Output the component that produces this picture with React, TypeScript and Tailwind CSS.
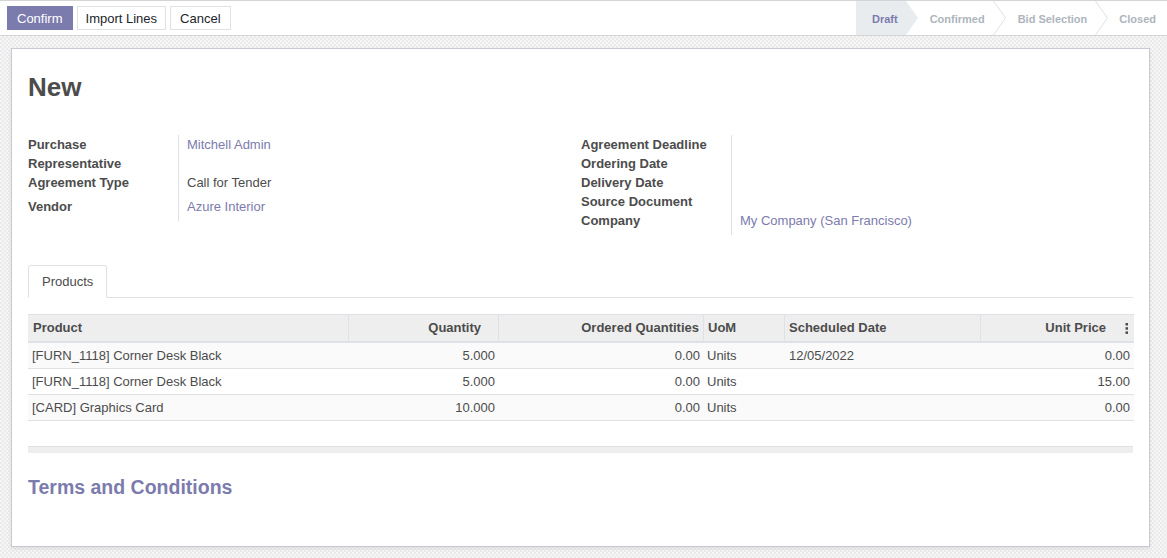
import React from "react";

const leftFields = [
  { label: "Purchase Representative", value: "Mitchell Admin", link: true, h: "h-[38px]", align: "items-start" },
  { label: "Agreement Type", value: "Call for Tender", link: false, h: "h-[19px]", align: "items-start" },
  { label: "Vendor", value: "Azure Interior", link: true, h: "h-[29px]", align: "items-center" },
];

const rightFields = [
  { label: "Agreement Deadline", value: "", h: "h-[19px]" },
  { label: "Ordering Date", value: "", h: "h-[19px]" },
  { label: "Delivery Date", value: "", h: "h-[19px]" },
  { label: "Source Document", value: "", h: "h-[19px]" },
  { label: "Company", value: "My Company (San Francisco)", h: "h-[24px]" },
];

const lines = [
  { product: "[FURN_1118] Corner Desk Black", qty: "5.000", ordered: "0.00", uom: "Units", date: "12/05/2022", price: "0.00" },
  { product: "[FURN_1118] Corner Desk Black", qty: "5.000", ordered: "0.00", uom: "Units", date: "", price: "15.00" },
  { product: "[CARD] Graphics Card", qty: "10.000", ordered: "0.00", uom: "Units", date: "", price: "0.00" },
];

const Chevron = () => (
  <svg width="13" height="34" viewBox="0 0 13 34" className="shrink-0">
    <path d="M0.5 0 L12.5 17 L0.5 34" fill="none" stroke="#dee2e6" strokeWidth="1" />
  </svg>
);

const StatusBar = () => (
  <div className="ml-auto flex h-[34px] items-stretch text-[11px] font-bold">
    <div className="flex items-center bg-[#e9ecef] pl-4 pr-2 pt-[2px] text-[#7c7bad]">Draft</div>
    <svg width="12" height="34" viewBox="0 0 12 34" className="shrink-0">
      <path d="M0 0 L12 17 L0 34 Z" fill="#e9ecef" />
    </svg>
    <div className="flex items-center pl-3 pr-2 pt-[2px] text-[#adb5bd]">Confirmed</div>
    <Chevron />
    <div className="flex items-center pl-3 pr-2 pt-[2px] text-[#adb5bd]">Bid Selection</div>
    <Chevron />
    <div className="flex items-center pl-[11px] pr-[11px] pt-[2px] text-[#adb5bd]">Closed</div>
  </div>
);

const KebabIcon = () => (
  <svg width="4" height="11" viewBox="0 0 4 11" className="inline-block">
    <rect x="0.5" y="0" width="2.5" height="2.5" fill="#4c4c4c" />
    <rect x="0.5" y="4.2" width="2.5" height="2.5" fill="#4c4c4c" />
    <rect x="0.5" y="8.4" width="2.5" height="2.5" fill="#4c4c4c" />
  </svg>
);

export default function App() {
  return (
    <div
      className="h-[558px] w-[1167px] overflow-hidden bg-[#f0f0f0] bg-[repeating-conic-gradient(#eaeaea_0_25%,#f6f6f6_0_50%)] bg-[length:4px_4px] text-[13px] text-[#4c4c4c]"
      style={{ fontFamily: '"Liberation Sans", Arial, sans-serif' }}
    >
      {/* control panel */}
      <div className="flex h-[36px] items-start border-t border-b border-[#d4d4d4] bg-white">
        <div className="flex gap-1 pl-[7px] pt-[5px]">
          <button className="h-6 border border-[#7c7bad] bg-[#7c7bad] px-[9px] leading-none text-white">
            Confirm
          </button>
          <button className="h-6 border border-[#dee2e6] bg-white px-2 leading-none text-[#212529]">
            Import Lines
          </button>
          <button className="h-6 border border-[#dee2e6] bg-white px-[9px] leading-none text-[#212529]">
            Cancel
          </button>
        </div>
        <StatusBar />
      </div>

      {/* sheet */}
      <div className="ml-[11px] mr-[17px] mt-3 h-[499px] border border-[#c9c9d4] bg-white px-4 pt-[23px] shadow-[0_2px_4px_rgba(0,0,0,0.08)]">
        <h1 className="text-[26px] font-bold leading-[31px] text-[#4c4c4c]">New</h1>

        <div className="mt-[32px] flex">
          <div className="grid w-[553px] grid-cols-[151px_1fr] content-start">
            {leftFields.map((f) => (
              <React.Fragment key={f.label}>
                <div className={`${f.h} flex ${f.align} border-r border-[#dee2e6] pr-2 font-bold leading-[19px]`}>
                  {f.label}
                </div>
                <div className={`${f.h} flex ${f.align} pl-2 leading-[19px] ${f.link ? "text-[#7c7bad]" : ""}`}>
                  {f.value}
                </div>
              </React.Fragment>
            ))}
          </div>
          <div className="grid flex-1 grid-cols-[151px_1fr] content-start">
            {rightFields.map((f) => (
              <React.Fragment key={f.label}>
                <div className={`${f.h} border-r border-[#dee2e6] pr-2 font-bold leading-[19px]`}>{f.label}</div>
                <div className={`${f.h} pl-2 leading-[19px] text-[#7c7bad]`}>{f.value}</div>
              </React.Fragment>
            ))}
          </div>
        </div>

        {/* tabs */}
        <div className="mt-[30px] flex border-b border-[#dee2e6]">
          <div className="-mb-px flex h-[33px] items-center rounded-t-[3px] border border-b-white border-[#dee2e6] bg-white px-[13px] text-[#4c4c4c]">
            Products
          </div>
        </div>

        {/* lines */}
        <table className="mt-4 w-full table-fixed border-separate border-spacing-0">
          <colgroup>
            <col className="w-[321px]" />
            <col className="w-[150px]" />
            <col className="w-[205px]" />
            <col className="w-[81px]" />
            <col className="w-[196px]" />
            <col className="w-[153px]" />
          </colgroup>
          <thead>
            <tr className="bg-[#eeeeee] font-bold">
              <th className="h-[29px] border-t border-r border-b-2 border-[#dee2e6] pl-[5px] text-left">Product</th>
              <th className="h-[29px] border-t border-r border-b-2 border-[#dee2e6] pr-[17px] text-right">Quantity</th>
              <th className="h-[29px] border-t border-r border-b-2 border-[#dee2e6] pr-1 text-right">Ordered Quantities</th>
              <th className="h-[29px] border-t border-r border-b-2 border-[#dee2e6] pl-[4px] text-left">UoM</th>
              <th className="h-[29px] border-t border-r border-b-2 border-[#dee2e6] pl-[4px] text-left">Scheduled Date</th>
              <th className="h-[29px] border-t border-b-2 border-[#dee2e6] pr-[5px] text-right">
                <span className="flex items-center justify-end gap-[19px]">
                  Unit Price
                  <KebabIcon />
                </span>
              </th>
            </tr>
          </thead>
          <tbody>
            {lines.map((l, i) => (
              <tr key={i} className={i % 2 === 0 ? "bg-[#fafafa]" : "bg-white"}>
                <td className="h-[26px] truncate border-b border-[#dee2e6] pl-[4px]">{l.product}</td>
                <td className="h-[26px] border-b border-[#dee2e6] pr-1 text-right">{l.qty}</td>
                <td className="h-[26px] border-b border-[#dee2e6] pr-1 text-right">{l.ordered}</td>
                <td className="h-[26px] border-b border-[#dee2e6] pl-[3px]">{l.uom}</td>
                <td className="h-[26px] border-b border-[#dee2e6] pl-[4px]">{l.date}</td>
                <td className="h-[26px] border-b border-[#dee2e6] pr-1 text-right">{l.price}</td>
              </tr>
            ))}
          </tbody>
        </table>

        <div className="mt-[25px] h-[7px] border-t border-[#dee2e6] bg-[#eeeeee]" />

        <h2 className="mt-[22px] text-[19.5px] font-bold leading-[24px] text-[#7c7bad]">Terms and Conditions</h2>
      </div>
    </div>
  );
}
